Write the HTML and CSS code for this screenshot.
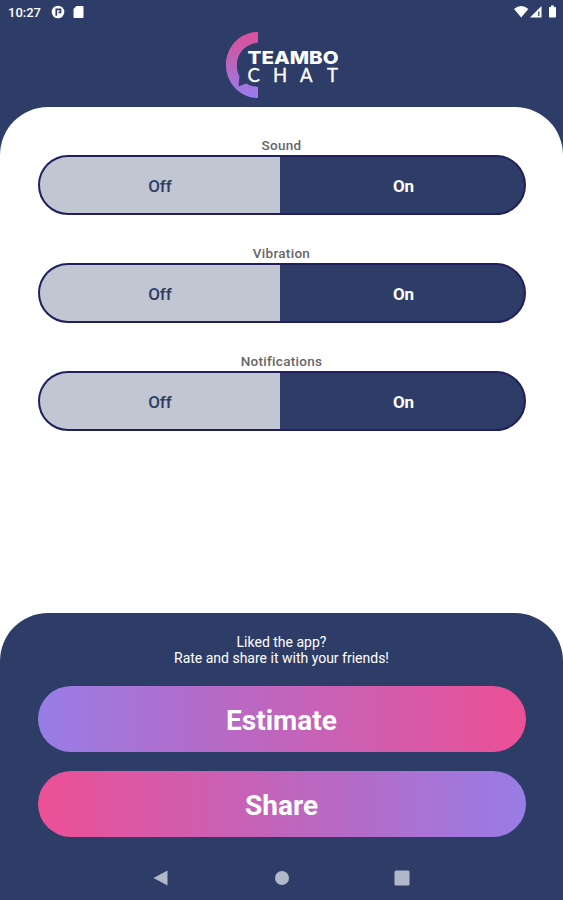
FILE: index.html
```html
<!DOCTYPE html>
<html lang="en">

<head>
    <meta charset="UTF-8" />
    <title>Settings - Teambo Chat</title>
    <meta name="viewport" content="width=device-width, initial-scale=1" />
    <link rel="stylesheet" href="styles.css">
</head>

<body>
    <div class="status-bar">
        <span class="time">10:27</span>
        <svg class="status-left" width="36" height="14" viewBox="0 0 36 14">
            <circle cx="8" cy="7" r="6.3" fill="#fff" />
            <path d="M6.300 10.800V4.300h4.200v3.200H8.500" fill="none" stroke="#2e3d68" stroke-width="1.7" />
            <path d="M26.5 1h6.2q.8 0 .8.8v10.4q0 .8-.8.8h-8.4q-.8 0-.8-.8V4z" fill="#fff" />
        </svg>
        <svg class="status-right" width="44" height="14" viewBox="0 0 44 14">
            <path d="M1 4Q8.200-2 15.400 4L8.200 12.500z" fill="#fff" />
            <path d="M28.500 1v11.500H17z" fill="#fff" />
            <path d="M25.800 6.500v4.500" stroke="#2e3d68" stroke-width="1.3" />
            <path d="M38 .5h3v1.500h1.200q.8 0 .8.800v9q0 .8-.8.800h-5.400q-.8 0-.8-.8v-9q0-.8.8-.8H38z" fill="#fff" />
        </svg>
    </div>

    <header class="header">
        <svg class="logo" width="116" height="68" viewBox="0 0 116 68">
            <defs>
                <linearGradient id="arc" x1="0" y1="0" x2="0" y2="1">
                    <stop offset="0" stop-color="#df4f9a" />
                    <stop offset=".5" stop-color="#b667bd" />
                    <stop offset="1" stop-color="#9a7cf0" />
                </linearGradient>
            </defs>
            <path d="M33 1C15 1 1 16 1 34s14 33 32 33V56Q25 55 21 52.500L13.500 55.500 14.500 45.500C9 35 11 15 33 11.500z" fill="url(#arc)" />
            <text class="logo-bold" x="22.500" y="32.500" textLength="91" lengthAdjust="spacingAndGlyphs">TEAMBO</text>
            <g class="logo-thin">
                <text x="22.500" y="51">C</text>
                <text x="48" y="51">H</text>
                <text x="75" y="51">A</text>
                <text x="102" y="51">T</text>
            </g>
        </svg>
    </header>

    <main class="settings">
        <div class="label">Sound</div>
        <div class="switch">
            <div class="option">Off</div>
            <div class="option active">On</div>
        </div>

        <div class="label">Vibration</div>
        <div class="switch">
            <div class="option">Off</div>
            <div class="option active">On</div>
        </div>

        <div class="label">Notifications</div>
        <div class="switch">
            <div class="option">Off</div>
            <div class="option active">On</div>
        </div>
    </main>

    <footer class="footer">
        <p class="liked">Liked the app?<br>Rate and share it with your friends!</p>
        <a class="btn btn-estimate">Estimate</a>
        <a class="btn btn-share">Share</a>

        <nav class="nav-bar">
            <svg width="16" height="16" viewBox="0 0 16 16">
                <path d="M14.500.5v15L.5 8z" />
            </svg>
            <svg width="16" height="16" viewBox="0 0 16 16">
                <circle cx="8" cy="8" r="7" />
            </svg>
            <svg width="16" height="16" viewBox="0 0 16 16">
                <rect x=".5" y=".5" width="15" height="15" rx="1.500" />
            </svg>
        </nav>
    </footer>
</body>

</html>
```

FILE: styles.css
```css
body,
html {
    height: 100%;
    margin: 0;
    padding: 0;
}

body {
    display: flex;
    flex-direction: column;
    font-family: Roboto, "Liberation Sans", sans-serif;
    background: linear-gradient(#2e3d68 50%, #fff 50%);
    overflow: hidden;
}

.status-bar {
    display: flex;
    align-items: center;
    height: 24px;
    padding: 0 6px 0 8px;
    box-sizing: border-box;
}

.time {
    width: 35px;
    color: #fff;
    font-size: 13px;
    font-weight: 500;
}

.status-left {
    margin-left: 7px;
}

.status-right {
    margin-left: auto;
}

.header {
    display: flex;
    justify-content: center;
    height: 83px;
    padding: 7px 0 0 2px;
    box-sizing: border-box;
}

.logo-bold {
    font-family: Inter, sans-serif;
    font-size: 18px;
    font-weight: 800;
    fill: #fff;
}

.logo-thin {
    font-family: Lato, sans-serif;
    font-size: 18.5px;
    font-weight: 400;
    fill: #fff;
    stroke: #fff;
    stroke-width: 0.3px;
}

.settings {
    flex: 1;
    padding: 29px 37.5px 0;
    background-color: #fff;
    border-radius: 48px 48px 0 0;
}

.label {
    height: 19px;
    line-height: 18px;
    color: #666;
    font-size: 13.5px;
    font-weight: 500;
    letter-spacing: 0.3px;
    text-align: center;
}

.switch {
    display: flex;
    height: 60px;
    margin-bottom: 29px;
    border: 2px solid #211f5c;
    border-radius: 30px;
    background-color: #2e3d68;
    box-sizing: border-box;
    overflow: hidden;
}

.option {
    width: 240px;
    display: flex;
    align-items: center;
    justify-content: center;
    padding: 1px 0 0 1px;
    box-sizing: border-box;
    background-color: #c1c6d3;
    color: #2e3d68;
    font-size: 17px;
    font-weight: 500;
}

.option.active {
    flex: 1;
    padding-left: 4px;
    background-color: transparent;
    color: #fff;
    font-weight: 700;
}

.footer {
    height: 287px;
    padding: 21px 37.5px 0;
    background-color: #2e3d68;
    border-radius: 48px 48px 0 0;
    box-sizing: border-box;
}

.liked {
    margin: 0 0 20px;
    color: #fff;
    font-size: 14px;
    line-height: 16px;
    text-align: center;
}

.btn {
    display: block;
    height: 66px;
    line-height: 69px;
    margin-bottom: 18.5px;
    border-radius: 33px;
    color: #fff;
    font-size: 28px;
    font-weight: 700;
    text-align: center;
}

.btn-estimate {
    background: linear-gradient(90deg, #987de6, #b46bc8 35%, #ec5095);
}

.btn-share {
    background: linear-gradient(90deg, #ec5095, #b46bc8 65%, #987de6);
}

.nav-bar {
    display: flex;
    justify-content: space-between;
    width: 257px;
    margin: 33px auto 0;
    fill: #b0b8ca;
}
```
